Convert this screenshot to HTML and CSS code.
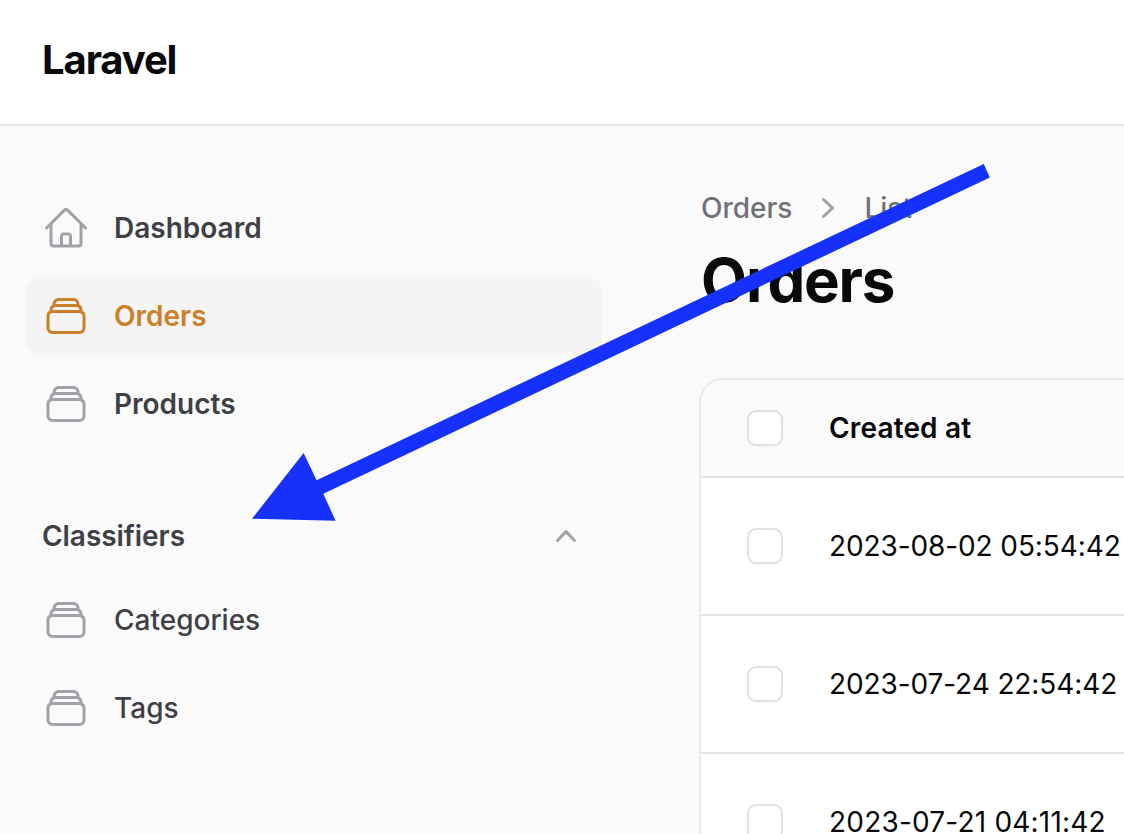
FILE: index.html
```html
<!DOCTYPE html>
<html lang="en">
<head>
<meta charset="utf-8">
<title>Orders - Laravel</title>
<link rel="stylesheet" href="styles.css">
</head>
<body>
<svg class="sprite" aria-hidden="true">
  <symbol id="stack" viewBox="0 0 24 24"><path d="M6 6.878V6a2.25 2.25 0 012.25-2.25h7.5A2.25 2.25 0 0118 6v.878m-12 0c.235-.083.487-.128.75-.128h10.5c.263 0 .515.045.75.128m-12 0A2.25 2.25 0 004.5 9v.878m13.5-3A2.25 2.25 0 0119.5 9v.878m0 0a2.246 2.246 0 00-.75-.128H5.25c-.263 0-.515.045-.75.128m15 0A2.25 2.25 0 0121 12v6a2.25 2.25 0 01-2.25 2.25H5.25A2.25 2.25 0 013 18v-6c0-.98.626-1.813 1.5-2.122"/></symbol>
  <symbol id="home" viewBox="0 0 24 24"><path d="M2.25 12l8.954-8.955c.44-.439 1.152-.439 1.591 0L21.75 12M4.5 9.75v10.125c0 .621.504 1.125 1.125 1.125H9.75v-4.875c0-.621.504-1.125 1.125-1.125h2.25c.621 0 1.125.504 1.125 1.125V21h4.125c.621 0 1.125-.504 1.125-1.125V9.75M8.25 21h8.25"/></symbol>
</svg>
<header class="topbar"><span class="brand">Laravel</span></header>
<div class="layout">
  <nav class="sidebar">
    <a class="item"><svg class="icon"><use href="#home"/></svg><span>Dashboard</span></a>
    <a class="item active"><svg class="icon"><use href="#stack"/></svg><span>Orders</span></a>
    <a class="item"><svg class="icon"><use href="#stack"/></svg><span>Products</span></a>
    <div class="group"><span>Classifiers</span><svg class="chevron" viewBox="0 0 20 20"><path fill-rule="evenodd" d="M14.77 12.79a.75.75 0 01-1.06-.02L10 8.832 6.29 12.77a.75.75 0 11-1.08-1.04l4.25-4.5a.75.75 0 011.08 0l4.25 4.5a.75.75 0 01-.02 1.06z"/></svg></div>
    <a class="item sub"><svg class="icon"><use href="#stack"/></svg><span>Categories</span></a>
    <a class="item sub"><svg class="icon"><use href="#stack"/></svg><span>Tags</span></a>
  </nav>
  <main class="content">
    <div class="crumbs"><span>Orders</span><svg class="separator" viewBox="0 0 20 20"><path fill-rule="evenodd" d="M7.21 14.77a.75.75 0 01.02-1.06L11.168 10 7.23 6.29a.75.75 0 111.04-1.08l4.5 4.25a.75.75 0 010 1.08l-4.5 4.25a.75.75 0 01-1.06-.02z"/></svg><span>List</span></div>
    <h1 class="title">Orders</h1>
    <section class="table">
      <div class="row head"><i class="check"></i><span>Created at</span></div>
      <div class="row"><i class="check"></i><span>2023-08-02 05:54:42</span></div>
      <div class="row"><i class="check"></i><span>2023-07-24 22:54:42</span></div>
      <div class="row"><i class="check"></i><span>2023-07-21 04:11:42</span></div>
    </section>
  </main>
</div>
<svg class="arrow" viewBox="0 0 1124 834"><path d="M983.7 164L989.8 177.5L323.3 493.8L335.6 520.8L252 518.8L303.6 453L316.6 480.2Z"/></svg>
</body>
</html>
```
FILE: styles.css
```css
* { box-sizing: border-box; }
body { margin: 0; width: 1124px; height: 834px; overflow: hidden; background: #fafafa; color: #09090b; font-family: Inter, sans-serif; font-size: 28px; line-height: 40px; white-space: nowrap; }
.sprite { display: none; }
.topbar { height: 126px; padding: 40px 42px; background: #fff; border-bottom: 2px solid #e4e4e5; }
.brand { display: block; font-size: 40px; font-weight: 700; letter-spacing: -1.1px; }
.layout { display: flex; height: 708px; }
.sidebar { width: 640px; padding: 62px 38px 0 26px; flex: none; }
.item { display: flex; align-items: center; gap: 24px; width: 576px; height: 80px; margin-bottom: 8px; padding: 0 16px; border-radius: 16px; color: #3f3f46; font-weight: 600; }
.active { background: #f4f4f4; color: #cc7f29; }
.sub { font-weight: 500; }
.icon { width: 48px; height: 48px; fill: none; stroke: #a1a1aa; stroke-width: 1.5; stroke-linecap: round; stroke-linejoin: round; }
.active .icon { stroke: #cc7f29; }
.group { display: flex; align-items: center; justify-content: space-between; width: 576px; height: 56px; margin: 64px 0 16px; padding: 0 16px; color: #3f3f46; font-weight: 600; letter-spacing: -0.05px; }
.chevron, .separator { width: 40px; height: 40px; fill: #a1a1aa; }
.content { display: flex; flex-direction: column; padding: 62px 0 0 59px; flex: 1; min-width: 0; overflow: hidden; }
.crumbs { display: flex; align-items: center; gap: 16px; padding-left: 2px; color: #71717a; font-weight: 500; }
.title { margin: 16px 0 62px 2px; font-size: 60px; line-height: 72px; font-weight: 700; letter-spacing: -1.3px; }
.table { flex: 1; min-height: 0; border: 2px solid #e9e9e9; border-width: 2px 0 0 2px; border-radius: 24px 0 0 0; background: #fff; overflow: hidden; }
.row { display: flex; align-items: center; gap: 46px; height: 138px; padding-left: 46px; border-bottom: 2px solid #e4e4e5; line-height: 24px; letter-spacing: -0.1px; }
.row:last-child { border-bottom-color: transparent; letter-spacing: 0.2px; }
.head { height: 98px; background: #fafafa; font-weight: 600; letter-spacing: 0.15px; }
.check { width: 36px; height: 36px; flex: none; border: 2px solid #e1e1e2; border-radius: 9px; background: #fff; box-shadow: 0 2px 2px rgba(0,0,0,.02); }
.arrow { position: absolute; left: 0; top: 0; width: 1124px; height: 834px; fill: #1531fb; pointer-events: none; }
```
